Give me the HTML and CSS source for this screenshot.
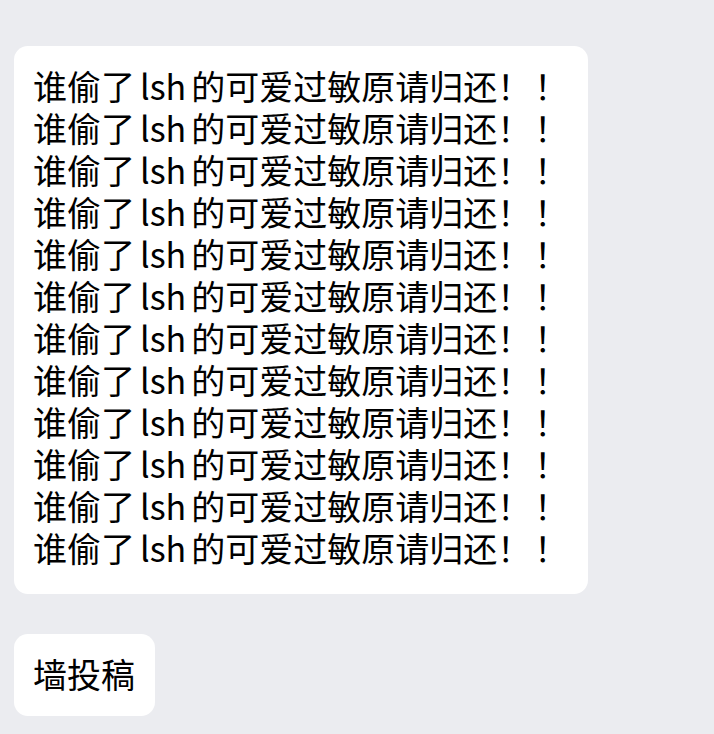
FILE: index.html
```html
<!DOCTYPE html>
<html lang="zh-CN">
<head>
<meta charset="utf-8">
<link rel="stylesheet" href="styles.css">
</head>
<body>
<div class="chat">
  <div class="bubble bubble-long">
    <div class="line">谁偷了<span class="latin">lsh</span>的可爱过敏原请归还<span class="bang">！！</span></div>
    <div class="line">谁偷了<span class="latin">lsh</span>的可爱过敏原请归还<span class="bang">！！</span></div>
    <div class="line">谁偷了<span class="latin">lsh</span>的可爱过敏原请归还<span class="bang">！！</span></div>
    <div class="line">谁偷了<span class="latin">lsh</span>的可爱过敏原请归还<span class="bang">！！</span></div>
    <div class="line">谁偷了<span class="latin">lsh</span>的可爱过敏原请归还<span class="bang">！！</span></div>
    <div class="line">谁偷了<span class="latin">lsh</span>的可爱过敏原请归还<span class="bang">！！</span></div>
    <div class="line">谁偷了<span class="latin">lsh</span>的可爱过敏原请归还<span class="bang">！！</span></div>
    <div class="line">谁偷了<span class="latin">lsh</span>的可爱过敏原请归还<span class="bang">！！</span></div>
    <div class="line">谁偷了<span class="latin">lsh</span>的可爱过敏原请归还<span class="bang">！！</span></div>
    <div class="line">谁偷了<span class="latin">lsh</span>的可爱过敏原请归还<span class="bang">！！</span></div>
    <div class="line">谁偷了<span class="latin">lsh</span>的可爱过敏原请归还<span class="bang">！！</span></div>
    <div class="line">谁偷了<span class="latin">lsh</span>的可爱过敏原请归还<span class="bang">！！</span></div>
  </div>
  <div class="bubble bubble-short">
    <div class="line">墙投稿</div>
  </div>
</div>
</body>
</html>
```
FILE: styles.css
```css
html, body {
  margin: 0;
  padding: 0;
  background: #ebecf0;
}
body {
  font-family: "Noto Sans CJK SC", "Noto Sans", sans-serif;
  color: #000;
}
.chat {
  display: flex;
  flex-direction: column;
  align-items: flex-start;
  gap: 40px;
  padding: 46px 14px 0 14px;
}
.bubble {
  background: #ffffff;
  border-radius: 14px;
  padding: 19px 20px 21px 19px;
  font-size: 34px;
  line-height: 42px;
}
.bubble-long {
  width: 535px;
  padding-bottom: 25px;
}
.line {
  white-space: nowrap;
}
.latin {
  margin: 0 5px 0 5px;
}
.bang {
  letter-spacing: 3px;
}
```
